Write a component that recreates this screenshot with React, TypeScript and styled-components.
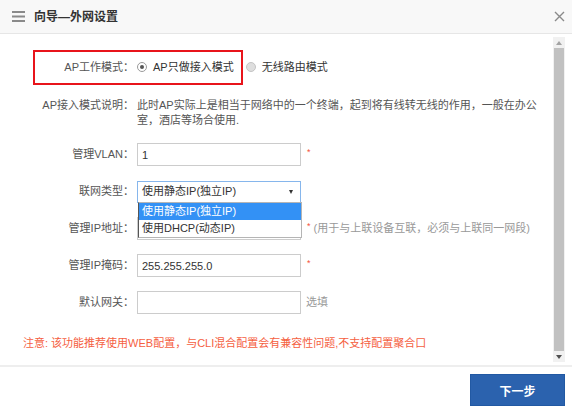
import React from 'react';
import styled, { createGlobalStyle } from 'styled-components';

// 全局样式
const GlobalStyle = createGlobalStyle`
  html, body {
    margin: 0;
    padding: 0;
    background: #ffffff;
  }
  body {
    font-family: 'Liberation Sans', 'Noto Sans CJK SC', sans-serif;
    font-size: 11px;
    color: #555555;
  }
`;

const Dialog = styled.div`
  width: 572px;
  height: 414px;
  display: flex;
  flex-direction: column;
  background: #ffffff;
`;

const Header = styled.div`
  height: 33px;
  flex-shrink: 0;
  display: flex;
  align-items: center;
  padding: 0 7px 0 12px;
  background: #f8f8f8;
  border-bottom: 1px solid #e6e6e6;
`;

const Title = styled.div`
  flex: 1;
  margin-left: 9px;
  font-size: 12px;
  font-weight: bold;
  color: #333333;
  line-height: 16px;
`;

const Body = styled.div`
  height: 331px;
  flex-shrink: 0;
  display: flex;
  border-bottom: 2px solid #eeeeee;
`;

const Content = styled.div`
  flex: 1;
  display: flex;
  flex-direction: column;
  padding-top: 16px;
`;

const ScrollBar = styled.div`
  width: 12px;
  margin: 3px 7px 3px 0;
  display: flex;
  flex-direction: column;
  align-items: center;
  background: #f1f1f1;
`;

const ScrollArrow = styled.div`
  height: 11px;
  width: 12px;
  display: flex;
  align-items: center;
  justify-content: center;
`;

const ScrollThumb = styled.div`
  flex: 1;
  width: 10px;
  background: #c1c1c1;
`;

const Row = styled.div<{ $h?: number; $mt: number; $top?: boolean }>`
  position: relative;
  display: flex;
  align-items: ${(p) => (p.$top ? 'flex-start' : 'center')};
  height: ${(p) => (p.$h ? `${p.$h}px` : 'auto')};
  margin-top: ${(p) => p.$mt}px;
  line-height: 15px;
`;

const Label = styled.div`
  width: 134px;
  flex-shrink: 0;
  text-align: right;
  color: #555555;
  white-space: nowrap;
`;

const Field = styled.div`
  margin-left: 3px;
  display: flex;
  align-items: center;
  position: relative;
`;

const Desc = styled.div`
  margin-left: 3px;
  width: 406px;
  color: #555555;
  line-height: 15px;
`;

const Mark = styled.div`
  position: absolute;
  left: 33px;
  top: 0;
  width: 210px;
  height: 35px;
  box-sizing: border-box;
  border: 2px solid #e8141b;
  pointer-events: none;
`;

const Radio = styled.span<{ $checked?: boolean }>`
  width: 10px;
  height: 10px;
  box-sizing: border-box;
  border-radius: 50%;
  border: 1px solid ${(p) => (p.$checked ? '#9a9a9a' : '#c4c4c4')};
  background: ${(p) => (p.$checked ? '#ffffff' : '#dedede')};
  display: inline-flex;
  align-items: center;
  justify-content: center;
  margin-right: 6px;
  &::after {
    content: '';
    display: ${(p) => (p.$checked ? 'block' : 'none')};
    width: 4px;
    height: 4px;
    border-radius: 50%;
    background: #555555;
  }
`;

const RadioText = styled.span<{ $gap?: number }>`
  color: #333333;
  margin-right: ${(p) => p.$gap || 0}px;
`;

const Input = styled.input`
  width: 164px;
  height: 23px;
  box-sizing: border-box;
  border: 1px solid #cccccc;
  padding: 0 4px;
  margin: 0;
  font-family: 'Liberation Sans', 'Noto Sans CJK SC', sans-serif;
  font-size: 11px;
  color: #333333;
  outline: none;
`;

const Select = styled.div`
  width: 164px;
  height: 22px;
  box-sizing: border-box;
  border: 1px solid #86b6ec;
  padding: 0 4px;
  display: flex;
  align-items: center;
  justify-content: space-between;
  color: #333333;
  position: relative;
`;

const Caret = styled.span`
  width: 0;
  height: 0;
  border-left: 2.5px solid transparent;
  border-right: 2.5px solid transparent;
  border-top: 4px solid #333333;
  margin-right: 3px;
`;

const OptionList = styled.div`
  position: absolute;
  top: 100%;
  left: 0;
  width: 164px;
  box-sizing: border-box;
  border: 1px solid #b5b5b5;
  border-left-color: #555555;
  background: #ffffff;
  z-index: 5;
`;

const Option = styled.div<{ $active?: boolean }>`
  height: 17px;
  line-height: 17px;
  padding: 0 3px;
  background: ${(p) => (p.$active ? '#3391f5' : '#ffffff')};
  color: ${(p) => (p.$active ? '#ffffff' : '#333333')};
`;

const Star = styled.span`
  color: #f5503c;
  margin-left: 6px;
  font-size: 9px;
  align-self: flex-start;
  margin-top: 2px;
`;

const Hint = styled.span<{ $ml?: number }>`
  color: #999999;
  margin-left: ${(p) => p.$ml || 4}px;
`;

const Note = styled.div`
  margin-top: 21px;
  padding-left: 23px;
  line-height: 16px;
  color: #f5603f;
`;

const Footer = styled.div`
  flex: 1;
  display: flex;
  justify-content: flex-end;
  align-items: flex-start;
  padding: 7px 7px 0 0;
`;

const NextButton = styled.button`
  width: 95px;
  height: 32px;
  border: 1px solid #2259a3;
  background: #2b62ae;
  color: #ffffff;
  font-family: 'Liberation Sans', 'Noto Sans CJK SC', sans-serif;
  font-size: 12px;
  font-weight: bold;
  padding: 0;
  cursor: pointer;
`;

const MenuIcon = () => (
  <svg width="13" height="11" viewBox="0 0 13 11">
    <rect x="0" y="0" width="13" height="2" fill="#8a8a8a" />
    <rect x="0" y="4.5" width="13" height="2" fill="#8a8a8a" />
    <rect x="0" y="9" width="13" height="2" fill="#8a8a8a" />
  </svg>
);

const CloseIcon = () => (
  <svg width="11" height="11" viewBox="0 0 11 11">
    <path d="M1 1 L10 10 M10 1 L1 10" stroke="#8a8a8a" strokeWidth="1.4" />
  </svg>
);

const App: React.FC = () => {
  return (
    <>
      <GlobalStyle />
      <Dialog>
        <Header>
          <MenuIcon />
          <Title>向导—外网设置</Title>
          <CloseIcon />
        </Header>
        <Body>
          <Content>
            <Row $h={34} $mt={0}>
              <Mark />
              <Label>AP工作模式：</Label>
              <Field>
                <Radio $checked />
                <RadioText $gap={12}>AP只做接入模式</RadioText>
                <Radio />
                <RadioText>无线路由模式</RadioText>
              </Field>
            </Row>
            <Row $mt={14} $top>
              <Label>AP接入模式说明：</Label>
              <Desc>
                此时AP实际上是相当于网络中的一个终端，起到将有线转无线的作用，一般在办公室，酒店等场合使用.
              </Desc>
            </Row>
            <Row $h={23} $mt={15}>
              <Label>管理VLAN：</Label>
              <Field>
                <Input defaultValue="1" />
                <Star>*</Star>
              </Field>
            </Row>
            <Row $h={23} $mt={14}>
              <Label>联网类型：</Label>
              <Field>
                <Select>
                  <span>使用静态IP(独立IP)</span>
                  <Caret />
                  <OptionList>
                    <Option $active>使用静态IP(独立IP)</Option>
                    <Option>使用DHCP(动态IP)</Option>
                  </OptionList>
                </Select>
              </Field>
            </Row>
            <Row $h={23} $mt={14}>
              <Label>管理IP地址：</Label>
              <Field>
                <Input defaultValue="" />
                <Star>*</Star>
                <Hint $ml={3}>(用于与上联设备互联，必须与上联同一网段)</Hint>
              </Field>
            </Row>
            <Row $h={23} $mt={14}>
              <Label>管理IP掩码：</Label>
              <Field>
                <Input defaultValue="255.255.255.0" />
                <Star>*</Star>
              </Field>
            </Row>
            <Row $h={23} $mt={14}>
              <Label>默认网关：</Label>
              <Field>
                <Input defaultValue="" />
                <Hint $ml={5}>选填</Hint>
              </Field>
            </Row>
            <Note>注意: 该功能推荐使用WEB配置，与CLI混合配置会有兼容性问题,不支持配置聚合口</Note>
          </Content>
          <ScrollBar>
            <ScrollArrow>
              <svg width="6" height="4" viewBox="0 0 6 4">
                <path d="M0 4 L3 0 L6 4 Z" fill="#a3a3a3" />
              </svg>
            </ScrollArrow>
            <ScrollThumb />
            <ScrollArrow>
              <svg width="6" height="4" viewBox="0 0 6 4">
                <path d="M0 0 L6 0 L3 4 Z" fill="#505050" />
              </svg>
            </ScrollArrow>
          </ScrollBar>
        </Body>
        <Footer>
          <NextButton>下一步</NextButton>
        </Footer>
      </Dialog>
    </>
  );
};

export default App;
